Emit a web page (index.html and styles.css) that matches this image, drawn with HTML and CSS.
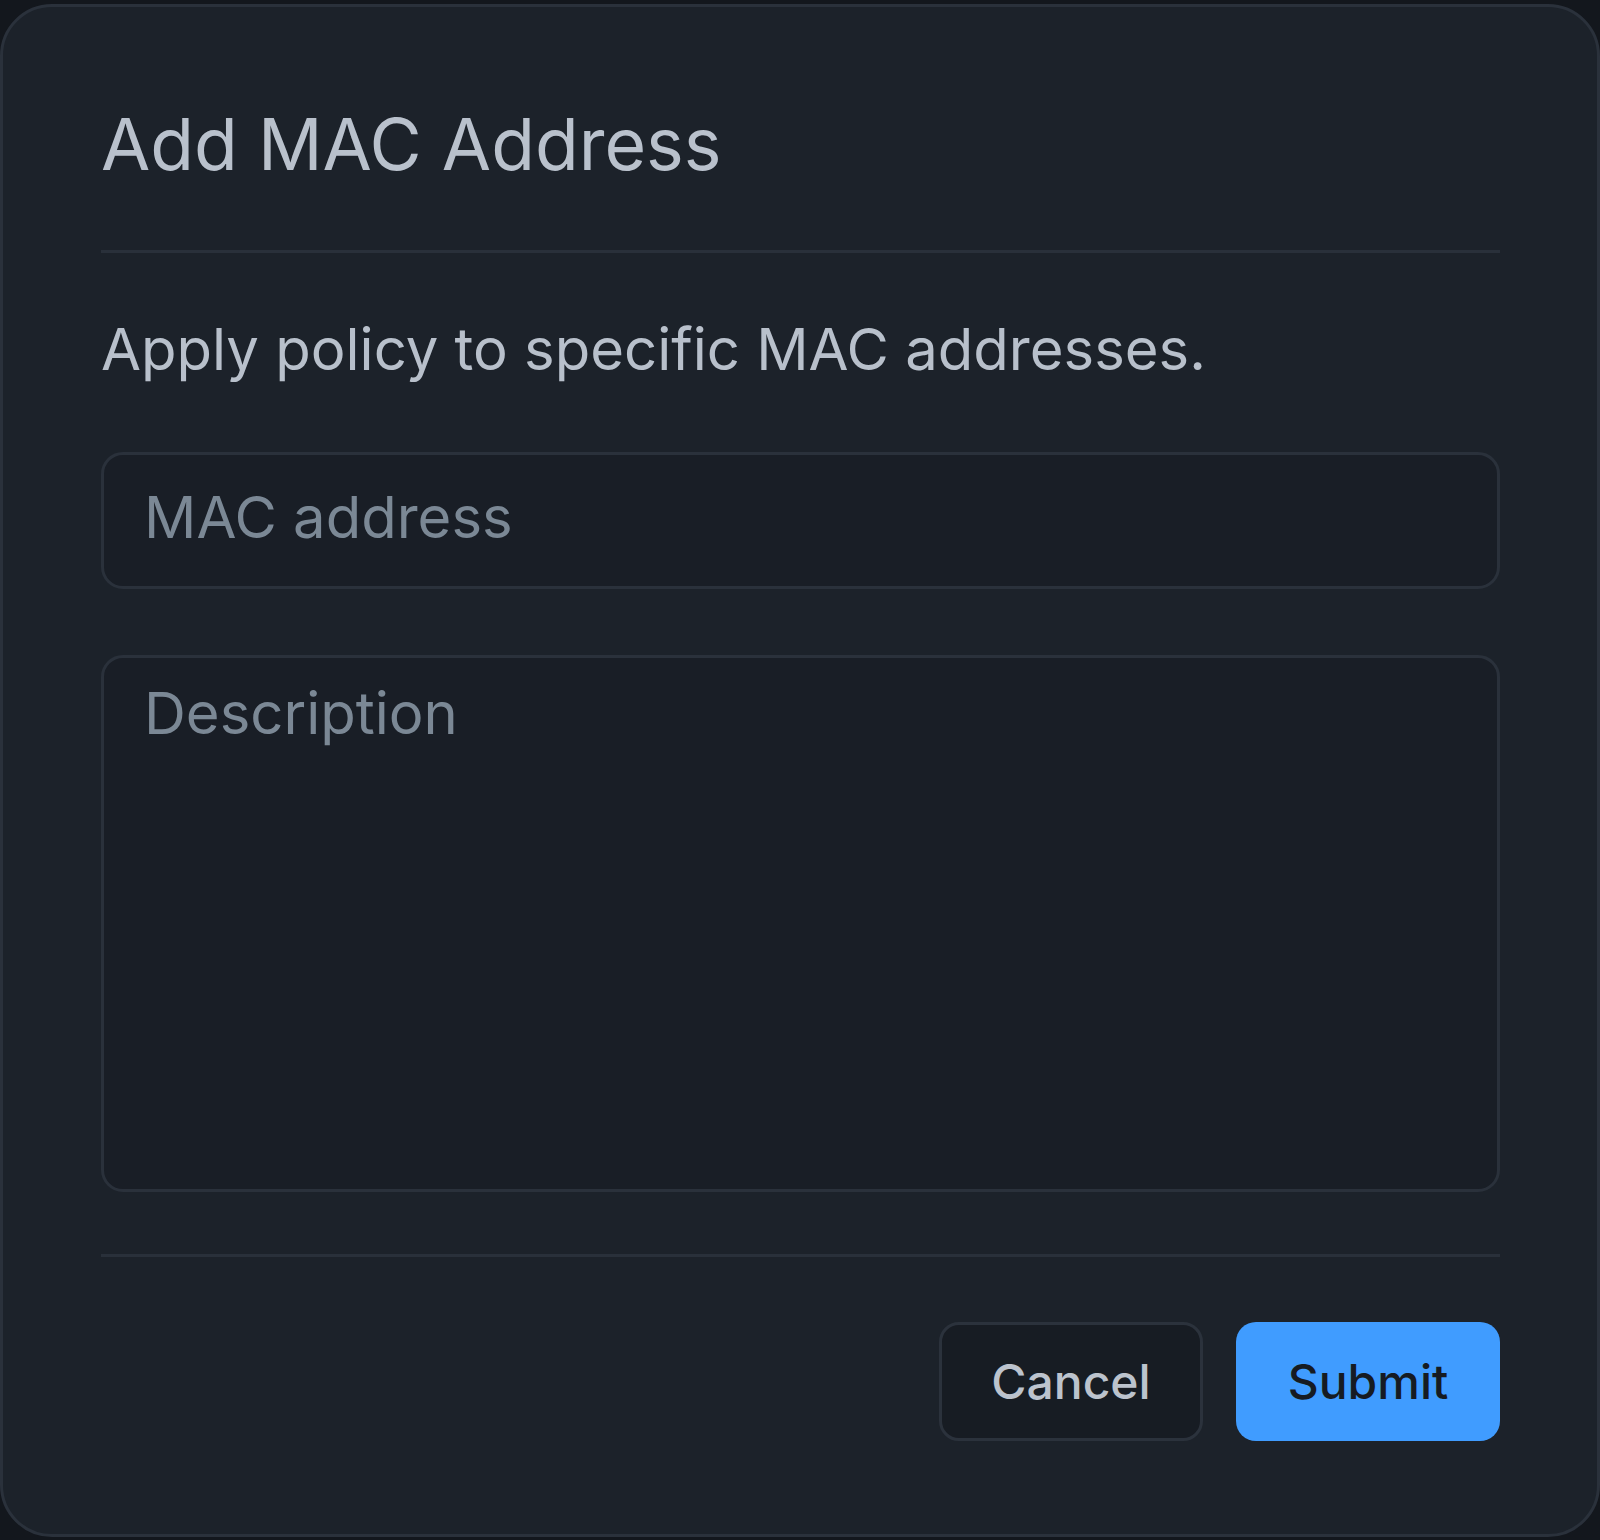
FILE: index.html
```html
<!DOCTYPE html>
<html lang="en">
<head>
<meta charset="utf-8">
<title>Add MAC Address</title>
<link rel="stylesheet" href="styles.css">
</head>
<body>
<div class="dialog">
  <h1 class="dialog-title">Add MAC Address</h1>
  <hr class="divider divider-top">
  <p class="dialog-text">Apply policy to specific MAC addresses.</p>
  <form class="dialog-form">
    <input class="field field-input" type="text" placeholder="MAC address">
    <textarea class="field field-area" placeholder="Description"></textarea>
  </form>
  <hr class="divider divider-bottom">
  <div class="dialog-actions">
    <button class="btn btn-cancel" type="button">Cancel</button>
    <button class="btn btn-submit" type="button">Submit</button>
  </div>
</div>
</body>
</html>
```

FILE: styles.css
```css
* { box-sizing: border-box; }

html, body {
  margin: 0;
  padding: 0;
  background: #13171d;
  font-family: Inter, "Noto Sans", sans-serif;
}

.dialog {
  margin: 4px 0 0 0;
  width: 1600px;
  border: 3px solid #2a313b;
  border-radius: 52px;
  background: #1c222a;
  padding: 94px 97px 93px 98px;
  display: flex;
  flex-direction: column;
}

.dialog-title {
  margin: 0;
  font-size: 71.5px;
  line-height: 86px;
  font-weight: 400;
  color: #b9c1cc;
  letter-spacing: 0;
}

.divider {
  margin: 0;
  height: 3px;
  border: 0;
  background: #29303a;
}

.divider-top { margin-top: 63px; }

.dialog-text {
  margin: 61px 0 0 0;
  font-size: 58px;
  line-height: 70px;
  color: #b8c0cb;
}

.dialog-form {
  margin-top: 68px;
  display: flex;
  flex-direction: column;
  gap: 66px;
}

.field {
  display: block;
  width: 100%;
  border: 3px solid #2a313b;
  border-radius: 22px;
  background: #191e26;
  color: #b8c0cb;
  font-family: Inter, "Noto Sans", sans-serif;
  font-size: 58px;
  line-height: 70px;
  padding: 0 40px;
  outline: none;
}

.field::placeholder {
  color: #7b8895;
  opacity: 1;
}

.field-input {
  height: 137px;
  padding-bottom: 7px;
}

.field-area {
  height: 537px;
  padding-top: 20px;
  resize: none;
}

.divider-bottom { margin-top: 62px; }

.dialog-actions {
  margin-top: 65px;
  display: flex;
  justify-content: flex-end;
  gap: 33px;
}

.btn {
  width: 264px;
  height: 119px;
  border-radius: 20px;
  font-family: Inter, "Noto Sans", sans-serif;
  font-size: 48px;
  font-weight: 500;
  padding: 0;
}

.btn-cancel {
  background: #171c23;
  border: 3px solid #2b323c;
  color: #bcc3cd;
}

.btn-submit {
  background: #409cff;
  border: 0;
  color: #161b22;
}
```
